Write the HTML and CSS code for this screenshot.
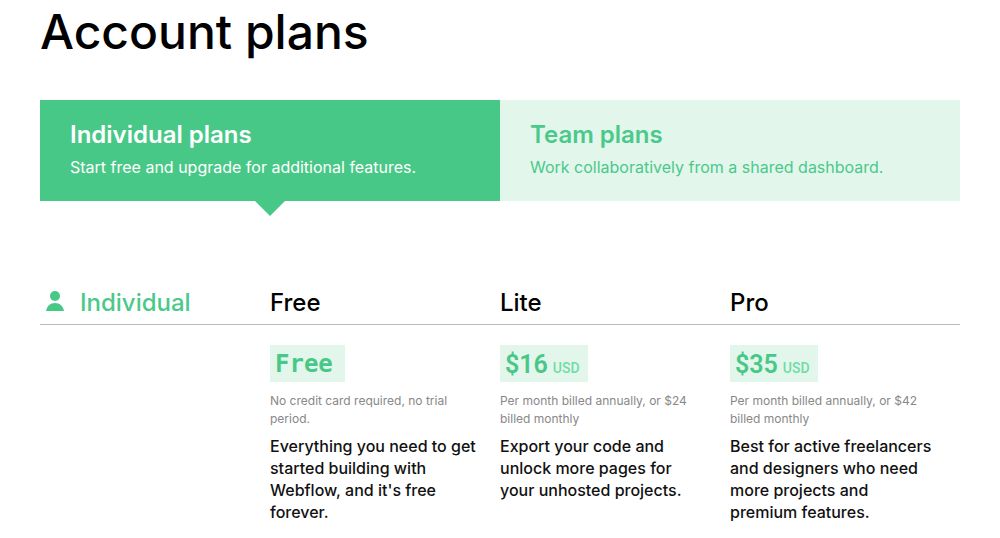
FILE: index.html
```html
<!DOCTYPE html>
<html lang="en">
<head>
<meta charset="utf-8">
<title>Account plans</title>
<link rel="stylesheet" href="styles.css">
</head>
<body>
<main class="page">
<h1 class="title">Account plans</h1>
<nav class="tabs">
<a class="tab tab-active" href="#individual"><span class="tab-name">Individual plans</span><span class="tab-text">Start free and upgrade for additional features.</span></a>
<a class="tab" href="#team"><span class="tab-name">Team plans</span><span class="tab-text">Work collaboratively from a shared dashboard.</span></a>
</nav>
<section id="individual">
<div class="row heads">
<h2 class="head group"><svg class="icon" viewBox="0 0 20 24" aria-hidden="true"><circle cx="10" cy="5" r="5"/><path d="M1 20c1-5 4-8 9-8s8 3 9 8z"/></svg>Individual</h2>
<h3 class="head">Free</h3>
<h3 class="head">Lite</h3>
<h3 class="head">Pro</h3>
</div>
<div class="row details">
<div class="plan plan-first"><p class="price price-word">Free</p><p class="note">No credit card required, no trial period.</p><p class="pitch">Everything you need to get started building with Webflow, and it's free forever.</p></div>
<div class="plan"><p class="price">$16<span class="usd">USD</span></p><p class="note">Per month billed annually, or $24 billed monthly</p><p class="pitch">Export your code and unlock more pages for your unhosted projects.</p></div>
<div class="plan"><p class="price">$35<span class="usd">USD</span></p><p class="note">Per month billed annually, or $42 billed monthly</p><p class="pitch">Best for active freelancers and designers who need more projects and premium features.</p></div>
</div>
</section>
</main>
</body>
</html>
```
FILE: styles.css
```css
* { box-sizing: border-box; }
body { margin: 0; background: #fff; color: #000; font-family: Inter, "Liberation Sans", sans-serif; }
h1, h2, h3, p { margin: 0; }
.page { padding: 0 40px 16px; }
.title { padding: 4px 0 40px; font-size: 48px; line-height: 56px; font-weight: 500; }
.tabs { display: grid; grid-template-columns: 1fr 1fr; }
.tab { position: relative; display: flex; flex-direction: column; gap: 5px; padding: 20px 30px 22px; background: #e3f6ec; color: #4ac98a; text-decoration: none; }
.tab-active { background: #48c887; color: #fff; }
.tab-active::after { content: ""; position: absolute; top: 100%; left: 50%; margin-left: -15px; border: 15px solid transparent; border-top-color: #48c887; border-bottom: 0; }
.tab-name { font-size: 24px; line-height: 30px; font-weight: 600; }
.tab-text { font-size: 16px; line-height: 24px; }
.row { display: grid; grid-template-columns: repeat(4, 1fr); }
.heads { margin-top: 85px; padding-bottom: 4px; border-bottom: 1px solid #bbb; }
.head { font-size: 24px; line-height: 34px; font-weight: 500; }
.group { display: flex; align-items: center; gap: 15px; padding-left: 5px; color: #4ac98a; }
.icon { width: 20px; height: 24px; fill: #48c887; }
.details { padding-top: 20px; }
.plan { padding-right: 22px; }
.plan-first { grid-column: 2; }
.price { display: table; padding: 2px 8px 0 5px; background: #e3f6ec; color: #48c887; font-family: Roboto, sans-serif; font-size: 25px; line-height: 35px; font-weight: 600; }
.price-word { font-family: "DejaVu Sans Mono", monospace; font-size: 24px; font-weight: 700; padding-right: 12px; }
.usd { margin-left: 5px; font-size: 14px; line-height: 16px; font-weight: 500; color: #70dca4; }
.note { margin-top: 10px; font-size: 12px; line-height: 18px; color: #888; }
.pitch { margin-top: 7px; font-size: 16px; line-height: 22px; font-weight: 500; color: #111; }
```
